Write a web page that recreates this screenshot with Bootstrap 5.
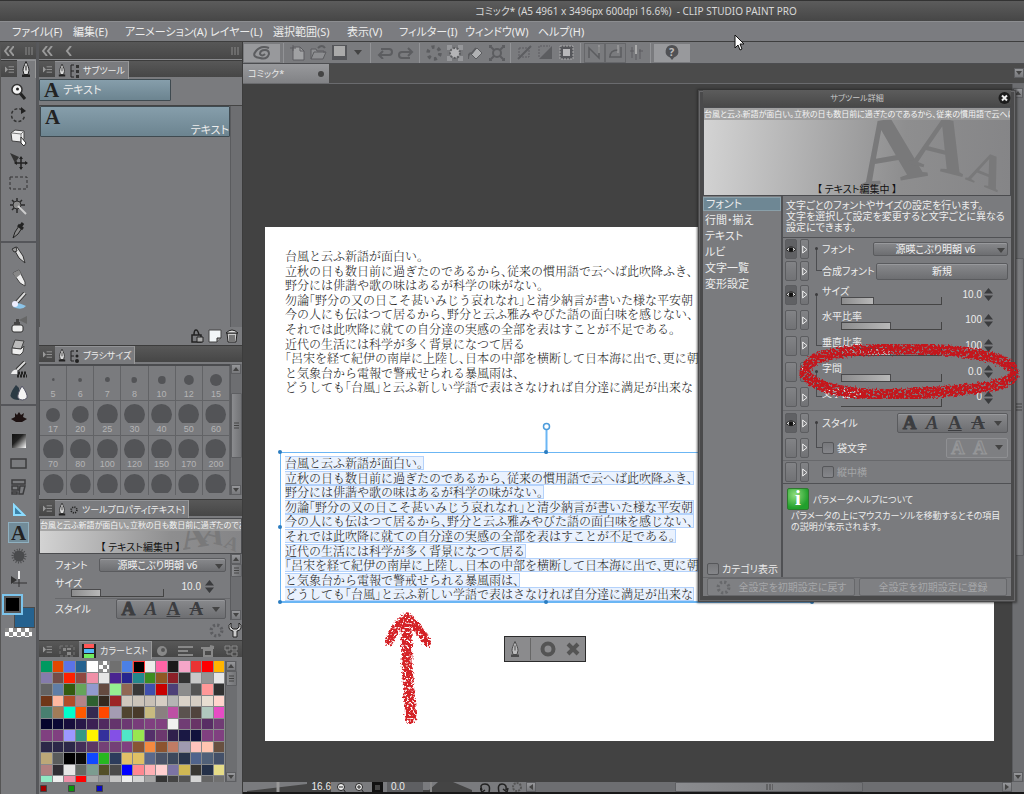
<!DOCTYPE html>
<html lang="ja">
<head>
<meta charset="utf-8">
<meta name="viewport" content="width=device-width, initial-scale=1">
<title>CLIP STUDIO PAINT PRO</title>
<link href="https://cdn.jsdelivr.net/npm/bootstrap@5.3.0/dist/css/bootstrap.min.css" rel="stylesheet">
<style>
:root{--ui:#7a7b7e;--dark:#484848;--line:#505154;--lit:#919295}
body{font-family:"Noto Sans","Noto Sans CJK JP",sans-serif;font-size:11px;line-height:12px;color:#ececec;background:var(--ui);font-feature-settings:"palt";min-height:100vh;overflow:hidden;cursor:default}
button,input{font:inherit;color:inherit;padding:0;border:0;background:none;font-feature-settings:inherit}
svg{display:block;flex:none}
a{color:inherit;text-decoration:none}
.window-col{height:100vh}
.titlebar{height:21px;background:linear-gradient(#5c5c5c,#464646);border-top:1px solid #333;color:#d8d8d8;padding-left:248px;font-size:10px;line-height:20px}
.menubar{display:grid;grid-template-columns:61px 52px 85px 63px 74px 52px 66px 73px auto;height:21px;padding-left:12px;line-height:20px;border-top:1px solid #8c8d90;background:#7b7c80;border-bottom:1px solid #3e3e3e}
.darkstrip{background:linear-gradient(#575757,#474747)}
.colhead{height:18px;padding:0 3px;border-bottom:1px solid #8a8b8e}
.toolcol{width:37px;border-left:1px solid #555;border-right:1px solid #55565a}
.panelcol{width:206px;border-left:2px solid #57585b;border-right:1px solid #3c3c3c}
.tabrow{height:17px;background:linear-gradient(#585858,#464646);border-top:1px solid #3c3c3c;margin-bottom:2px}
.toolcol .tabrow{margin-bottom:3px}
.tabrow .menubtn{width:16px}
.tab-on{background:var(--ui);border-top:1px solid var(--lit);border-right:1px solid #999;padding:0 3px;height:18px;font-size:9px}
.toolbtn{height:23px;width:35px;display:flex;align-items:center;justify-content:center}
.toolbtn.on span{background:#728c99;border:1px solid #8fb0c0;width:21px;height:21px;display:flex;align-items:center;justify-content:center}
.toolgroup+.toolgroup{border-top:2px solid #55565a}
.bluebtn{background:linear-gradient(#869eab,#6c8490);border:1px solid #3f4a50;border-radius:1px;text-align:left}
.bigA{font-family:"Liberation Serif",serif;font-weight:bold;font-size:21px;line-height:20px;color:#222}
.vscroll{width:12px;border-left:1px solid #5a5b5e;background:#6d6e71}
.sbtn{width:10px;height:10px;background:linear-gradient(#96979a,#77787b);border:1px solid #5e5f62;display:flex;align-items:center;justify-content:center}
.sthumb{background:linear-gradient(90deg,#8b8c8f,#727376);border:1px solid #5e5f62;border-radius:1px;display:flex;align-items:center;justify-content:center}
.brushgrid{display:grid;grid-template-columns:repeat(7,1fr);grid-auto-rows:35px;height:131px;overflow:hidden;border-top:2px solid #4b4c4f;border-left:1px solid #4b4c4f;flex:1}
.brushcell{display:flex;flex-direction:column;align-items:center;border-right:1px solid #626366;border-bottom:1px solid #626366;color:#b4b4b5;font-family:"Liberation Sans","Noto Sans CJK JP",sans-serif;font-size:9px;line-height:10px;position:relative}
.brushcell i{height:27px;display:flex;align-items:center;clip-path:inset(0 0 5px)}
.brushcell b{display:block;border-radius:50%;background:#535457}
.brushcell span{position:absolute;bottom:1px}
.preview{background:linear-gradient(95deg,#d4d4d4,#8e8e8f 65%,#858587);border:1px solid #4b4c4f;color:#111;overflow:hidden;position:relative}
.preview .strip{background:#9a9a9acc;color:#f4f4f4;font-size:8px;line-height:12px;white-space:nowrap;overflow:hidden}
.preview .ghost{position:absolute;right:0;top:0;height:100%}
.preview .cap{position:absolute;left:0;right:0;bottom:0;text-align:center;line-height:11px;font-size:10px}
.drop{background:linear-gradient(#88898c,#6d6e71);border:1px solid #5a5b5e;border-radius:2px;box-shadow:inset 0 1px #98999c;color:#f0f0f0}
select.drop{appearance:none;font:inherit;font-size:10px;text-align:center;text-align-last:center;padding:0 14px 0 4px;font-feature-settings:inherit}
.selwrap{position:relative;display:flex}
.selwrap select{width:100%}
.selwrap svg{position:absolute;right:3px;top:6px;pointer-events:none}
.bar-slider{appearance:none;display:block;height:8px;border-bottom:1px solid #444;border-right:1px solid #444;background:linear-gradient(90deg,#8c8c8d,#b8b8b8) no-repeat 1px 1px/calc(var(--v)*1% - 2px) 6px,linear-gradient(#4a4a4c,#4a4a4c) no-repeat 0 0/calc(var(--v)*1%) 8px}
.bar-slider::-webkit-slider-thumb{appearance:none;width:1px;height:7px;background:transparent}
.bar-slider::-moz-range-thumb{opacity:0}
.num{width:32px;text-align:right;font-family:"Liberation Sans",sans-serif;font-size:10px;height:12px}
.swatches{display:grid;grid-template-columns:repeat(16,1fr);width:184px;height:121px;overflow:hidden;align-content:start;background:#8b8b8d}
.swatches i{aspect-ratio:1;border-right:1px solid #88898b;border-bottom:1px solid #88898b}
.swatches i.on{outline:1px solid #f33;outline-offset:-1px;position:relative}
.checker{background:repeating-conic-gradient(#fff 0 25%,#8a8a8a 0 50%) 0 0/8px 8px}
.toolbar-main{height:22px;border-bottom:1px solid #4c4d50;padding-left:1px}
.tbtn{width:21px;height:20px;display:flex;align-items:center;justify-content:center;color:#5c5d60}
.tbtn.framed{border:1px solid #66676a}
.tbtn.lit{width:36px;height:18px;background:#98999c}
.vsep{width:1px;height:20px;background:#929396;margin:0 3px}
.doctabs{height:20px;background:#4b4b4b;border-bottom:1px solid #6a6b6e}
.doctab{width:86px;background:linear-gradient(#98999c,#818285);padding:0 5px;font-size:9px;color:#e9e9e9}
.workarea{background:#424242;padding:143px 18px 40px 22px;min-width:0;overflow:hidden}
.paper{background:#fff;height:514px;position:relative;color:#222;font-size:12px;font-weight:300;font-family:"Noto Serif CJK JP","Noto Sans CJK JP",serif;font-feature-settings:"halt";line-height:14px}
.lines{display:grid;grid-auto-rows:1fr;height:146px;white-space:nowrap;position:absolute;left:20px}
.lines.first{top:22px}
.selbox{position:absolute;left:15px;top:225px;width:532px;height:151px;border:1px solid #6bb6f4;border-bottom-width:2px}
.selbox .lines{left:4px;top:3px}
.selbox .lines span{background:#eaf2fe;border:1px solid #b4d2fb;border-left:0;line-height:12px;height:14px;display:inline-block;vertical-align:top}
.hnd{position:absolute;width:4px;height:4px;background:#2b7cc0;border-radius:50%}
.launcher{position:absolute;left:239px;top:409px;width:82px;height:26px;background:#8b8b8d;border:1px solid #2c2c2c;color:#545454}
.statusbar{height:12px;border-bottom:2px solid #181818;font-family:"Liberation Sans",sans-serif;font-size:10px;line-height:10px;background:var(--ui);overflow:hidden}
.dialog-sub{position:absolute;right:8px;top:90px;width:318px;height:512px;background:var(--ui);border:solid #4a4a4b;border-width:0 5px 6px 5px;box-shadow:0 0 2px 1px #222a;outline:1px solid #69696b;outline-offset:-2px}
.dialog-sub .dtitle{height:17px;background:linear-gradient(#5c5c5c,#484848);font-size:8px;color:#c8c8c8;text-align:center;line-height:16px;position:relative}
.catlist{width:80px;border-right:2px solid #505154;font-size:11px;padding-top:1px}
.catlist a{display:block;height:16px;line-height:15px;padding-left:2px;white-space:nowrap}
.catlist a.on{background:#6e8794;border:1px solid #899fa9;line-height:12px;height:14px;margin-bottom:1px}
.desc{font-size:10px;line-height:11px;padding:4px 0 0 3px;height:41px;white-space:nowrap}
.prow{display:flex;align-items:center;padding:0 3px 0 2px;height:22px}
.pgroup .prow{height:auto;min-height:0}
.pgroup{display:grid;grid-auto-rows:1fr;height:128px}
.prow.tall{height:25px}
.eye{width:12px;height:20px;border:1px solid #5c5d60;border-radius:2px;background:linear-gradient(#828386,#717275);margin-right:3px;display:flex;align-items:center;justify-content:center}
.eye.on{background:#606164}
.exp{width:9px;height:20px;border:1px solid #5c5d60;border-radius:2px;background:linear-gradient(#828386,#717275);display:flex;align-items:center;justify-content:center}
.tree{width:13px;align-self:stretch;position:relative}
.tree::before{content:"";position:absolute;left:7px;border-left:1px solid #4c4d50}
.tree.top::before{top:50%;bottom:0}.tree.mid::before{top:0;bottom:0}
.tree.end::before{top:0;bottom:50%;width:6px;border-bottom:1px solid #4c4d50}
.tree.top::after{content:"";position:absolute;left:6px;top:calc(50% - 2px);width:3px;height:3px;border-radius:50%;background:#3c3c3e}
.pbody{flex:1;display:flex;align-items:center;min-width:0;white-space:nowrap;font-size:10px}
.chk{appearance:none;width:12px;height:12px;border:1px solid #56575a;border-radius:2px;background:linear-gradient(#77787b,#85868a);margin-right:3px}
.stylebtns{height:20px;display:flex;align-items:center;justify-content:space-around}
.stylebtns button{font-family:"Liberation Serif",serif;font-weight:bold;font-size:19px;line-height:18px;color:#3c3d40}
.stylebtns .heavy{-webkit-text-stroke:1px #3c3d40}
.stylebtns.off{border-color:#8f9093;background:#7e7f82;box-shadow:none}.stylebtns.off button{color:#838487;-webkit-text-stroke:1px #969799}
.proprule{border-top:1px solid #68696c}
.infobox{border-top:1px solid #505154;height:95px;padding:4px 0 0 4px;font-size:9px;line-height:11px}
.infoicon{width:22px;height:22px;border-radius:2px;background:radial-gradient(circle at 35% 30%,#8fdc7c,#22a02c 70%);border:1px solid #2d7a2e;font:bold 21px/19px "Liberation Serif",serif;color:#fff;text-align:center}
.resetbtn{height:18px;border:1px solid #67686b;border-radius:2px;background:#7f8083;color:#a6a7a9;font-size:10px;flex:1;display:flex;align-items:center;justify-content:center}
.scribble{position:absolute;pointer-events:none}
.fgbg{height:34px;position:relative}
.fgbg span{position:absolute}
.fg{left:1px;top:0;width:21px;height:21px;background:#000;border:2px solid #7cc4ec;outline:2px solid #555;outline-offset:-4px}
.bg{left:13px;top:13px;width:21px;height:21px;background:#25628f;border:1px solid #4a4a4a}
.swatchwrap{padding:2px 0 0 2px}
</style>
</head>
<body>
<svg width="0" height="0" class="position-absolute" aria-hidden="true">
<defs>
<filter id="crayon" x="-10%" y="-10%" width="120%" height="120%"><feTurbulence type="fractalNoise" baseFrequency=".45" numOctaves="2" seed="4" result="n"/><feDisplacementMap in="SourceGraphic" in2="n" scale="6" xChannelSelector="R" yChannelSelector="B" result="d"/><feColorMatrix in="n" type="matrix" values="0 0 0 0 0  0 0 0 0 0  0 0 0 0 0  0 7 0 0 -2.2" result="m"/><feComposite in="d" in2="m" operator="in"/></filter>
<symbol id="nib" viewBox="0 0 10 16"><path d="M5 0C3 4 2 7 2 9l1 4h4l1-4C8 7 7 4 5 0z" fill="#ddd" stroke="#222"/><path d="M5 4v5" stroke="#222"/><path d="M1 13h8v2.500H1z" fill="#222"/></symbol>
<symbol id="plist" viewBox="0 0 10 10"><path d="M0 2l3 3-3 3zM4 2h6M4 5h6M4 8h6" fill="#999" stroke="#999"/></symbol>
<symbol id="dn" viewBox="0 0 8 5"><path d="M0 0h8L4 5z" fill="#444"/></symbol>
<symbol id="spin" viewBox="0 0 9 13"><path d="M0 5.500L4.500 0 9 5.500zM0 7.500L4.500 13 9 7.500z" fill="#3a3b3d"/></symbol>
<symbol id="tri" viewBox="0 0 6 9"><path d="M.7 1v7l4.300-3.500z" fill="none" stroke="#eee"/></symbol>
<symbol id="eyeo" viewBox="0 0 10 7"><path d="M0 3.500Q5-2 10 3.500 5 8 0 3.500z" fill="#ddd" stroke="#222"/><circle cx="5" cy="3.500" r="2.300" fill="#111"/></symbol>
<symbol id="burst" viewBox="0 0 14 14"><circle cx="7" cy="7" r="5" fill="none" stroke="currentColor" stroke-width="3" stroke-dasharray="2 1.930"/></symbol>
<symbol id="ua" viewBox="0 0 6 4"><path d="M0 4h6L3 0z" fill="#444"/></symbol>
<symbol id="da" viewBox="0 0 6 4"><path d="M0 0h6L3 4z" fill="#444"/></symbol>
<symbol id="aaa" viewBox="0 0 150 88"><g fill="#79797a" font-family="Liberation Serif,serif" font-weight="bold"><text x="-2" y="75" font-size="96" transform="rotate(-10 30 70)">A</text><text x="46" y="63" font-size="80" transform="rotate(14 75 60)">A</text><text x="104" y="78" font-size="50" transform="rotate(22 120 74)">A</text></g></symbol>
</defs></svg>

<div class="window-col d-flex flex-column">
<header>
 <div class="titlebar text-center">コミック* (A5 4961 x 3496px 600dpi 16.6%)&nbsp; - CLIP STUDIO PAINT PRO</div>
 <nav class="menubar"><a href="#">ファイル(F)</a><a href="#">編集(E)</a><a href="#">アニメーション(A)</a><a href="#">レイヤー(L)</a><a href="#">選択範囲(S)</a><a href="#">表示(V)</a><a href="#">フィルター(I)</a><a href="#">ウィンドウ(W)</a><a href="#">ヘルプ(H)</a></nav>
</header>

<div class="d-flex flex-grow-1" style="min-height:0">
<!-- tool palette -->
<aside class="toolcol flex-shrink-0">
 <div class="colhead darkstrip d-flex align-items-center justify-content-between"><svg width="10" height="10"><path d="M5 0L1 5l4 5M10 0L6 5l4 5" fill="none" stroke="#9a9a9a" stroke-width="2"/></svg><svg width="8" height="8"><path d="M1 0v8M4 0v8M7 0v8" stroke="#8a8a8a"/></svg></div>
 <div class="tabrow d-flex align-items-center"><span class="menubtn d-flex justify-content-center"><svg width="9" height="9"><use href="#plist"/></svg></span><span class="tab-on flex-grow-1 d-flex justify-content-center"><svg width="10" height="17"><use href="#nib"/></svg></span></div>
 <div class="toolgroup">
  <button class="toolbtn" aria-label="虫めがね"><svg width="18" height="18"><path d="M10 10l5 6" stroke="#222" stroke-width="3"/><circle cx="7" cy="6.500" r="5" fill="#f4f4f4" stroke="#333" stroke-width="1.500"/><circle cx="7.500" cy="6" r="1.500" fill="#222"/></svg></button>
  <button class="toolbtn" aria-label="回転"><svg width="18" height="18"><path d="M12 4A6.500 6.500 0 1 0 14.500 9" fill="none" stroke="#333" stroke-width="1.500" stroke-dasharray="3 2"/><path d="M11 1l5 4-5 3z" fill="#222"/></svg></button>
  <button class="toolbtn" aria-label="操作"><svg width="18" height="18"><path d="M1 4l4-3 9 1v8l-3 3-9-1z" fill="#eee" stroke="#444"/><path d="M2 4l9 1v8M11 5l3-3" fill="none" stroke="#777"/><path d="M11 8l5 6-2 3-3-3z" fill="#fff" stroke="#333"/></svg></button>
  <button class="toolbtn" aria-label="レイヤー移動"><svg width="18" height="18"><path d="M0 1l9 4-4 6z" fill="#333"/><path d="M11 5v12M5 11h12" stroke="#222" stroke-width="1.500"/><path d="M11 4l-2 3h4zM11 18l-2-3h4zM4 11l3-2v4zM18 11l-3-2v4z" fill="#222"/></svg></button>
  <button class="toolbtn" aria-label="選択範囲"><svg width="19" height="15"><rect x="1" y="1" width="17" height="12" fill="none" stroke="#333" stroke-dasharray="3 2"/></svg></button>
  <button class="toolbtn" aria-label="自動選択"><svg width="18" height="18"><path d="M7 0v15M0 7h15M2 2l10 10M12 2L2 12" stroke="#2c2c2c" stroke-width="1.500"/><circle cx="7" cy="7" r="4" fill="#8b8b8b" stroke="#2c2c2c"/><path d="M8 8l8 8" stroke="#ccc" stroke-width="2"/></svg></button>
  <button class="toolbtn" aria-label="スポイト"><svg width="16" height="18"><path d="M2 17l2-6 4-6 3 2-4 6z" fill="#888" stroke="#222"/><path d="M7 4l5 4M9 6l3-4" stroke="#222" stroke-width="3"/></svg></button>
 </div>
 <div class="toolgroup">
  <button class="toolbtn" aria-label="ペン"><svg width="16" height="18"><path d="M3 2l3-1 6 9 2 7-6-5-4-7z" fill="#ddd" stroke="#333"/><path d="M1 3l4-2 1 4-3 1z" fill="#999" stroke="#333"/></svg></button>
  <button class="toolbtn" aria-label="鉛筆"><svg width="16" height="18"><path d="M2 4l6-3 6 12v4l-5-3z" fill="#eee" stroke="#444"/><path d="M2 4l6-3 2 4-5 4z" fill="#888"/></svg></button>
  <button class="toolbtn" aria-label="筆"><svg width="18" height="18"><path d="M3 15q9 4 13-1-6-3-10-3z" fill="#8cc4e8"/><path d="M15 1L7 10" stroke="#333" stroke-width="4"/><path d="M15 1L7 10" stroke="#ddd" stroke-width="2"/><circle cx="5" cy="12" r="3" fill="#eef"/></svg></button>
  <button class="toolbtn" aria-label="エアブラシ"><svg width="18" height="18"><rect x="2" y="10" width="11" height="7" rx="2" fill="#eee" stroke="#333"/><path d="M4 7h6v3H4zM6 4h3v3H6z" fill="#444"/><path d="M9 5l8-4v8z" fill="#666"/></svg></button>
  <button class="toolbtn" aria-label="消しゴム"><svg width="18" height="18"><path d="M5 2l9 1-3 8-9-1z" fill="#bbb" stroke="#444"/><path d="M2 10l9 1 3-3-1 6-3 3-8-1z" fill="#eee" stroke="#444"/></svg></button>
  <button class="toolbtn" aria-label="デコレーション"><svg width="18" height="18"><path d="M15 1L7 9" stroke="#333" stroke-width="4"/><path d="M15 1L7 9" stroke="#ddd" stroke-width="2"/><path d="M1 13q2-5 6-4v4z" fill="#eee"/><path d="M8 12h9M7 15h10" stroke="#222" stroke-width="3" stroke-dasharray="2 1"/></svg></button>
  <button class="toolbtn" aria-label="色混ぜ"><svg width="18" height="18"><path d="M6 1Q-1 10 1 13t8 3V4z" fill="#2b3a44"/><path d="M12 2q6 8 5 12-5 4-9 0Q7 10 12 2z" fill="#f4f4f4" stroke="#556"/></svg></button>
 </div>
 <div class="toolgroup">
  <button class="toolbtn" aria-label="塗りつぶし"><svg width="18" height="14"><path d="M5 2l2 2 2-3 2 3 3-2-1 4 4 2-5 3H6L1 8l4-2z" fill="#1d1212"/></svg></button>
  <button class="toolbtn" aria-label="グラデーション"><svg width="14" height="14"><defs><linearGradient id="gd" x2="1" y2="1"><stop stop-color="#111"/><stop offset=".4" stop-color="#222"/><stop offset="1" stop-color="#fff"/></linearGradient></defs><rect width="14" height="14" fill="url(#gd)"/></svg></button>
  <button class="toolbtn" aria-label="図形"><svg width="17" height="11"><rect x="1" y="1" width="15" height="9" fill="none" stroke="#3c3c3e" stroke-width="1.500"/></svg></button>
  <button class="toolbtn" aria-label="コマ枠"><svg width="15" height="16"><path d="M1 1h13v4H1zM1 7h6v4H1zM1 13h5v2H1zM9 7l5 0-2 8H8z" fill="none" stroke="#3c3c3e" stroke-width="1.500"/></svg></button>
  <button class="toolbtn" aria-label="定規"><svg width="14" height="14"><path d="M2 2v10h10z" fill="#3c82a8" stroke="#8cdcff" stroke-width="2"/></svg></button>
  <button class="toolbtn on" aria-label="テキスト"><span class="bigA">A</span></button>
  <button class="toolbtn" aria-label="フキダシ"><svg width="16" height="16"><circle cx="8" cy="8" r="5.500" fill="#4a4b4d"/><circle cx="8" cy="8" r="6.500" fill="none" stroke="#4a4b4d" stroke-width="2" stroke-dasharray="1 1.500"/></svg></button>
  <button class="toolbtn" aria-label="線修正"><svg width="18" height="16"><path d="M1 5l6 4-6 4z" fill="#333"/><path d="M9 0v8" stroke="#eee" stroke-width="2"/><path d="M9 8v8M3 12h14" stroke="#333"/></svg></button>
 </div>
 <div class="fgbg mt-1"><span class="bg"></span><span class="fg"></span></div>
 <div class="checker mx-1" style="height:9px"></div>
</aside>

<!-- palettes -->
<aside class="panelcol flex-shrink-0">
 <div class="colhead darkstrip d-flex align-items-center"><svg width="30" height="10"><path d="M5 0L1 5l4 5M10 0L6 5l4 5M29 0l-4 5 4 5" fill="none" stroke="#9a9a9a" stroke-width="2"/></svg><svg class="ms-auto" width="8" height="8"><path d="M1 0v8M4 0v8M7 0v8" stroke="#8a8a8a"/></svg></div>
 <section>
  <div class="tabrow d-flex align-items-start"><span class="menubtn d-flex justify-content-center pt-1"><svg width="9" height="9"><use href="#plist"/></svg></span><span class="tab-on d-flex align-items-center gap-1"><svg width="8" height="17"><use href="#nib"/></svg><svg width="9" height="14"><path d="M4 1H1v12h3M1 7h3" fill="none" stroke="#222"/><path d="M6 1h3v3H6zM6 6h3v3H6zM6 11h3v3H6z" fill="#333"/></svg>サブツール</span></div>
  <button class="bluebtn d-flex align-items-center" style="width:65%;height:22px"><span class="bigA px-1">A</span>テキスト</button>
  <div class="d-flex mt-1" style="height:222px;border-top:1px solid #444;border-left:1px solid #555">
   <div class="flex-grow-1"><button class="bluebtn d-flex w-100 justify-content-between" style="height:31px"><span class="bigA ps-1">A</span><span class="align-self-end">テキスト</span></button></div><div class="vscroll"></div>
  </div>
  <div class="d-flex justify-content-end gap-1 align-items-center pe-1" style="height:18px"><svg width="14" height="14"><path d="M2 6h9v7H2zM4 6q0-5 2-5t3 5" fill="none" stroke="#222" stroke-width="1.500"/><path d="M7 8h6v5H7z" fill="#aaa" stroke="#222"/></svg><svg width="14" height="14"><path d="M1 1h12v8l-4 4H1z" fill="#f2f6f8" stroke="#444"/><path d="M9 13V9h4" fill="#999" stroke="#333"/></svg><svg width="12" height="14"><path d="M1 4h10l-1 9H2z" fill="#ccc" stroke="#222"/><path d="M0 4q6-6 12 0zM4 6v6M6 6v6M8 6v6" fill="#ddd" stroke="#222"/></svg></div>
 </section>
 <section>
  <div class="tabrow d-flex align-items-start"><span class="menubtn d-flex justify-content-center pt-1"><svg width="9" height="9"><use href="#plist"/></svg></span><span class="tab-on d-flex align-items-center gap-1"><svg width="8" height="17"><use href="#nib"/></svg><svg width="9" height="14"><path d="M4 2H1v10h3M1 7h3" fill="none" stroke="#222"/><circle cx="7" cy="2" r="1" fill="#222"/><circle cx="7" cy="7" r="1.500" fill="#222"/><circle cx="7" cy="12" r="2" fill="#222"/></svg>ブラシサイズ</span></div>
  <div class="d-flex"><div class="brushgrid" id="brushes"></div>
  <div class="vscroll d-flex flex-column"><span class="sbtn"><svg width="6" height="4"><use href="#ua"/></svg></span><span class="sthumb" style="margin-top:19px;height:65px"><svg width="5" height="7"><path d="M0 1h5M0 3.500h5M0 6h5" stroke="#444"/></svg></span><span class="sbtn mt-auto"><svg width="6" height="4"><use href="#da"/></svg></span></div></div>
 </section>
 <section class="pt-1">
  <div class="tabrow d-flex align-items-start"><span class="menubtn d-flex justify-content-center pt-1"><svg width="9" height="9"><use href="#plist"/></svg></span><span class="tab-on d-flex align-items-center gap-1"><svg width="8" height="17"><use href="#nib"/></svg><svg width="8" height="8"><use href="#burst" color="#222"/></svg>ツールプロパティ[テキスト]</span></div>
  <div class="preview" style="height:36px"><svg class="ghost" viewBox="0 0 150 88"><use href="#aaa"/></svg><div class="strip position-relative">台風と云ふ新語が面白い。立秋の日も数日前に過ぎたのである</div><div class="cap">【 テキスト編集中 】</div></div>
  <div class="d-flex" style="height:66px;overflow:hidden">
   <div class="flex-grow-1 ps-3" style="font-size:10px">
    <div class="d-flex align-items-center justify-content-between" style="height:21px"><label for="f1">フォント</label><span class="selwrap me-1" style="width:127px"><select id="f1" class="drop"><option>源暎こぶり明朝 v6</option></select><svg width="8" height="5"><use href="#dn"/></svg></span></div>
    <div class="d-flex align-items-center" style="height:23px"><div style="width:112px"><label class="d-block" for="s1">サイズ</label><input id="s1" type="range" class="bar-slider ms-3" style="--v:33;width:93px"></div><input class="num ms-auto" value="10.0" aria-label="サイズ値"><svg class="ms-1 me-3" width="9" height="13"><use href="#spin"/></svg></div>
    <div class="d-flex justify-content-between align-items-center proprule"><span>スタイル</span><div class="drop stylebtns me-1" style="width:110px"><button class="heavy">A</button><button><i>A</i></button><button><u>A</u></button><button><s>A</s></button><svg width="8" height="5"><use href="#dn"/></svg></div></div>
   </div>
   <div class="vscroll d-flex flex-column"><span class="sbtn"><svg width="6" height="4"><use href="#ua"/></svg></span><span class="sthumb" style="height:13px"><svg width="5" height="7"><path d="M0 1h5M0 3.500h5M0 6h5" stroke="#444"/></svg></span><span class="sbtn mt-auto"><svg width="6" height="4"><use href="#da"/></svg></span></div>
  </div>
  <div class="d-flex justify-content-end align-items-center gap-1" style="height:20px;color:#5c5d60"><svg width="15" height="15"><use href="#burst"/></svg><svg width="14" height="16"><path d="M3 1v4l2 2h4l2-2V1q3 2 2 5T9 9v6H5V9Q2 9 1 6t2-5z" fill="#ccc" stroke="#222"/></svg></div>
 </section>
 <section>
  <div class="tabrow d-flex align-items-start"><span class="menubtn d-flex justify-content-center pt-1"><svg width="9" height="9"><use href="#plist"/></svg></span><span class="px-1 pt-1"><svg width="16" height="12"><path d="M1 1h14v10H1z" fill="none" stroke="#777" stroke-dasharray="3 2"/><path d="M4 3h3v3H4zM8 3h4v2H8zM8 7h4v3H8z" fill="#888"/></svg></span>
  <span class="tab-on d-flex align-items-center gap-1"><svg width="14" height="14"><path d="M0 0h14v14H0z" fill="#222"/><path d="M2 0h10v4H2z" fill="#ff5656"/><path d="M2 5h10v4H2z" fill="#50b8f8"/><path d="M2 10h10v4H2z" fill="#70ec60"/></svg>カラーヒスト</span>
  <span class="d-flex flex-grow-1 justify-content-around pt-1"><svg width="13" height="12"><circle cx="6" cy="6" r="5" fill="#888"/><circle cx="7" cy="5" r="2" fill="#555"/></svg><svg width="15" height="12"><path d="M0 2h15M0 6h10M0 10h15" stroke="#888" stroke-width="2"/></svg><svg width="14" height="12"><path d="M0 3h13M3 5h8v6H3zM9 1l4 1" fill="none" stroke="#888" stroke-width="2"/></svg><svg width="14" height="12"><path d="M1 1h5v4H1zM8 1h5v4H8zM8 7h5v4H8zM3 5v4h5" fill="none" stroke="#888"/></svg></span></div>
  <div class="d-flex swatchwrap"><div class="swatches" id="swatches"></div>
   <div class="vscroll d-flex flex-column"><span class="sbtn"><svg width="6" height="4"><use href="#ua"/></svg></span><span class="sthumb" style="height:15px"><svg width="5" height="7"><path d="M0 1h5M0 3.500h5M0 6h5" stroke="#444"/></svg></span><span class="sbtn mt-auto"><svg width="6" height="4"><use href="#da"/></svg></span></div></div>
  <svg width="110" height="9" style="margin-top:2px"><g stroke="#444"><path d="M1.500 1.500h6v6h-6z" fill="#a00000"/><path d="M29.500 1.500h6v6h-6z" fill="#0a960a"/><path d="M57.500 1.500h6v6h-6z" fill="#0a0ac0"/></g></svg>
 </section>
</aside>

<!-- document -->
<main class="flex-grow-1 d-flex flex-column" style="min-width:0">
 <div class="toolbar-main d-flex align-items-center">
  <button class="tbtn lit" aria-label="CLIP STUDIO"><svg width="18" height="14"><path d="M16 2Q8-1 3 5t4 7q7 2 9-4 0-4-4-4-5 0-5 4 2 3 5 0" fill="none" stroke="currentColor" stroke-width="2"/></svg></button><i class="vsep"></i>
  <button class="tbtn" aria-label="新規"><svg width="15" height="16"><path d="M3 2h7l4 4v9H3z" fill="#a0a1a3" stroke="currentColor"/><path d="M10 2v4h4M0 3h6M3 0v6" fill="none" stroke="currentColor"/></svg></button>
  <button class="tbtn" aria-label="開く"><svg width="17" height="15"><path d="M1 14V4h5l1 2h7v2M1 14l3-7h12l-3 7z" fill="#8d8e91" stroke="currentColor"/><path d="M8 3q4-4 7 0" fill="none" stroke="currentColor" stroke-width="2"/></svg></button>
  <button class="tbtn" aria-label="保存"><svg width="15" height="15"><path d="M0 0h15v15H0z" fill="#55565a"/><path d="M2 1h11v10H2z" fill="#aaa"/></svg></button><svg width="8" height="5" class="ms-1"><use href="#dn"/></svg><i class="vsep ms-2"></i>
  <button class="tbtn" aria-label="取り消し"><svg width="16" height="12"><path d="M4 2h8q3 0 3 3t-3 3H3M6 4L2 8l4 4" fill="none" stroke="currentColor" stroke-width="2"/></svg></button>
  <button class="tbtn" aria-label="やり直し"><svg width="16" height="12"><path d="M12 11H4q-3 0-3-3t3-3h9M10 1l4 4-4 4" fill="none" stroke="currentColor" stroke-width="2"/></svg></button><i class="vsep"></i>
  <button class="tbtn" aria-label="消去"><svg width="16" height="16"><circle cx="8" cy="8" r="6" fill="none" stroke="currentColor" stroke-width="3.500" stroke-dasharray="3 3.280"/></svg></button>
  <button class="tbtn" aria-label="選択範囲外を消去"><svg width="16" height="16"><path d="M0 0h16v16H0z" fill="#96979a"/><path d="M5 0h6v16H5zM0 5h16v6H0z" fill="#77787b"/><circle cx="8" cy="8" r="5" fill="#b4b4b6" stroke="currentColor" stroke-width="2" stroke-dasharray="2 1.500"/></svg></button>
  <button class="tbtn" aria-label="塗りつぶし"><svg width="16" height="16"><path d="M3 9l6-6 5 5-6 6z" fill="#b0b1b3" stroke="currentColor"/><path d="M0 14q0-6 4-6l4-5" fill="none" stroke="currentColor" stroke-width="2"/></svg></button>
  <button class="tbtn" aria-label="拡大"><svg width="16" height="16"><circle cx="8" cy="8" r="4" fill="none" stroke="currentColor" stroke-width="2"/><path d="M1 1l4 4M15 1l-4 4M1 15l4-4M15 15l-4-4M0 3V0h3M13 0h3v3M0 13v3h3M13 16h3v-3" fill="none" stroke="currentColor" stroke-width="2"/></svg></button><i class="vsep"></i>
  <button class="tbtn" aria-label="選択解除"><svg width="15" height="15"><path d="M2 3h10v9H2z" fill="none" stroke="currentColor" stroke-dasharray="2 1"/><path d="M1 14L14 1" stroke="currentColor" stroke-width="2"/></svg></button>
  <button class="tbtn" aria-label="反転"><svg width="15" height="15"><path d="M14 1v13H1z" fill="currentColor"/><path d="M1 12V1h11" fill="none" stroke="currentColor" stroke-dasharray="2 1"/></svg></button>
  <button class="tbtn" aria-label="境界表示"><svg width="15" height="15"><path d="M1 1h13v13H1z" fill="#55565a" stroke="#aaa" stroke-dasharray="2 1"/><path d="M4 4h7v7H4z" fill="#b8b8ba"/></svg></button><i class="vsep"></i>
  <button class="tbtn framed" aria-label="定規スナップ"><svg width="15" height="15"><path d="M2 13V3l10 10V2" fill="none" stroke="currentColor" stroke-width="1.500"/><path d="M12 0v8" stroke="#aaa"/></svg></button>
  <button class="tbtn framed" aria-label="特殊定規"><svg width="15" height="15"><path d="M1 12h12V2M2 12q0-7 8-7" fill="none" stroke="currentColor" stroke-width="1.500"/><path d="M10 0v8" stroke="#aaa"/></svg></button>
  <button class="tbtn" aria-label="グリッド"><svg width="15" height="15"><path d="M1 6h4M10 6h4M3 2v11M7 8v7M11 4v10" stroke="currentColor"/><path d="M7 0v9" stroke="#aaa" stroke-width="2"/></svg></button><i class="vsep"></i>
  <button class="tbtn lit" aria-label="ヘルプ"><svg width="16" height="15"><path d="M8 0a7 6.500 0 0 1 2 12.500L8 15l-2-2.500A7 6.500 0 0 1 8 0z" fill="#505154"/><text x="5" y="11" font-size="11" font-weight="bold" fill="#bbb">?</text></svg></button>
 </div>
 <div class="doctabs d-flex justify-content-between"><div class="doctab d-flex align-items-center justify-content-between">コミック*<svg width="6" height="6"><circle cx="3" cy="3" r="3" fill="#444"/></svg></div><span class="sbtn mt-1"><svg width="6" height="4"><use href="#da"/></svg></span></div>
 <div class="d-flex flex-grow-1" style="min-height:0">
  <div class="workarea flex-grow-1">
   <div class="paper">
    <div class="lines first" data-text></div>
    <div class="selbox"><div class="lines" data-text></div>
     <svg class="position-absolute" style="left:261px;top:-31px" width="9" height="32"><path d="M4.500 8v24" stroke="#6bb6f4" stroke-width="2"/><circle cx="4.500" cy="4.500" r="3" fill="#fff" stroke="#4c9cdc" stroke-width="1.500"/></svg>
     <i class="hnd" style="left:-3px;top:-3px"></i><i class="hnd" style="left:calc(50% - 2px);top:-3px"></i><i class="hnd" style="left:-3px;top:calc(50% - 2px)"></i><i class="hnd" style="left:-3px;bottom:-3px"></i><i class="hnd" style="left:calc(50% - 2px);bottom:-3px"></i><i class="hnd" style="right:-3px;bottom:-3px"></i>
    </div>
    <div class="launcher d-flex align-items-center justify-content-around"><svg width="10" height="17"><use href="#nib" opacity=".6"/></svg><i style="width:1px;height:22px;background:#666"></i><svg width="16" height="16"><circle cx="8" cy="8" r="5.500" fill="none" stroke="#545454" stroke-width="4"/></svg><svg width="14" height="14"><path d="M2 2l10 10M12 2L2 12" stroke="#545454" stroke-width="4"/></svg></div>
    <svg class="scribble" style="left:113px;top:378px" width="62" height="125"><g filter="url(#crayon)" fill="none" stroke="#d42028" stroke-linecap="round" stroke-linejoin="round"><path d="M33 113C30 80 28 45 28 14" stroke-width="11"/><path d="M11 36Q18 20 29 12q11 10 20 25" stroke-width="9"/></g></svg>
   </div>
  </div>
  <div class="vscroll d-flex flex-column flex-shrink-0"><span class="sbtn mt-1"><svg width="6" height="4"><use href="#ua"/></svg></span><span class="sthumb" style="margin-top:42.500%;margin-top:160px;height:298px"><svg width="7" height="8"><path d="M0 1h7M0 4h7M0 7h7" stroke="#444"/></svg></span><span class="sbtn mt-auto"><svg width="6" height="4"><use href="#da"/></svg></span></div>
 </div>
 <div class="statusbar d-flex align-items-center">
  <svg width="60" height="10" class="ms-1"><path d="M0 9L60 2v8H0z" fill="#444"/><path d="M31 0v10" stroke="#999" stroke-width="3"/></svg><span class="text-end" style="width:24px;background:#444">16.6</span>
  <svg class="ms-1" width="48" height="11"><circle cx="6" cy="5" r="3.500" fill="#eee" stroke="#222"/><path d="M4 5h4M9 8l2 3" stroke="#222"/><circle cx="24" cy="5" r="3.500" fill="#eee" stroke="#222"/><path d="M22 5h4M24 3v4M27 8l2 3" stroke="#222"/><path d="M37 0h11v11H37z" fill="#111"/><path d="M40 3h5v5h-5z" fill="#444"/></svg>
  <span class="ms-1 ps-1" style="width:36px;background:#5e5f62">0.0</span><svg width="49" height="10"><path d="M0 10V8h6l9-8h15l19 8v2z" fill="#444"/><path d="M8 0v10" stroke="#888" stroke-width="2"/></svg>
  <svg class="ms-2" width="42" height="11"><path d="M2 8q-3-6 3-6t4 8M0 6l2 4 3-2M19 10q-2-8 3-8t4 6M23 7l4 3 1-4" fill="none" stroke="#222" stroke-width="1.500"/><circle cx="37" cy="5" r="4" fill="none" stroke="#555" stroke-width="2" stroke-dasharray="2 1"/></svg>
  <span class="sbtn ms-1"><svg width="4" height="6"><path d="M4 0v6L0 3z" fill="#444"/></svg></span><span class="flex-grow-1 d-flex justify-content-center" style="background:#6d6e71"><span class="sthumb" style="width:188px;height:10px"><svg width="7" height="6"><path d="M1 0v6M4 0v6M7 0v6" stroke="#444"/></svg></span></span><span class="sbtn"><svg width="4" height="6"><path d="M0 0v6l4-3z" fill="#444"/></svg></span><span style="width:12px"></span>
 </div>
</main>
</div>
</div>

<!-- floating sub tool detail window -->
<div class="dialog-sub" role="dialog" aria-label="サブツール詳細">
 <div class="dtitle">サブツール詳細<button class="position-absolute end-0 top-0" aria-label="閉じる"><svg width="13" height="15"><circle cx="6.500" cy="8" r="6" fill="#1c1c1c"/><path d="M4 5.500l5 5M9 5.500l-5 5" stroke="#eee" stroke-width="2"/></svg></button></div>
 <div class="preview" style="height:89px"><svg class="ghost" viewBox="0 0 150 88"><use href="#aaa"/></svg><div class="strip position-relative">台風と云ふ新語が面白い。立秋の日も数日前に過ぎたのであるから、従来の慣用語で云へば此</div><div class="cap">【 テキスト編集中 】</div></div>
 <div class="d-flex" style="height:381px">
  <div class="catlist d-flex flex-column flex-shrink-0"><a href="#" class="on">フォント</a><a href="#">行間・揃え</a><a href="#">テキスト</a><a href="#">ルビ</a><a href="#">文字一覧</a><a href="#">変形設定</a><label class="mt-auto d-flex align-items-center ps-1" style="font-size:10px;padding-bottom:2px"><input type="checkbox" class="chk">カテゴリ表示</label></div>
  <div class="flex-grow-1" style="min-width:0">
   <div class="desc">文字ごとのフォントやサイズの設定を行います。<br>文字を選択して設定を変更すると文字ごとに異なる<br>設定にできます。</div>
   <div style="border-top:1px solid #505154">
    <div class="prow"><button class="eye on" aria-label="表示"><svg width="10" height="7"><use href="#eyeo"/></svg></button><button class="exp" aria-label="展開"><svg width="6" height="9"><use href="#tri"/></svg></button><i class="tree top"></i><div class="pbody justify-content-between"><label for="f2">フォント</label><span class="selwrap" style="width:135px"><select id="f2" class="drop"><option>源暎こぶり明朝 v6</option></select><svg width="8" height="5"><use href="#dn"/></svg></span></div></div>
    <div class="prow"><button class="eye" aria-label="表示"></button><button class="exp" aria-label="展開"><svg width="6" height="9"><use href="#tri"/></svg></button><i class="tree end"></i><div class="pbody justify-content-between">合成フォント<button class="drop" style="width:132px;height:17px">新規</button></div></div>
    <div class="pgroup" id="params"></div>
    <div class="prow tall proprule"><button class="eye on" aria-label="表示"><svg width="10" height="7"><use href="#eyeo"/></svg></button><button class="exp" aria-label="展開"><svg width="6" height="9"><use href="#tri"/></svg></button><i class="tree top"></i><div class="pbody justify-content-between">スタイル<div class="drop stylebtns" style="width:111px"><button class="heavy">A</button><button><i>A</i></button><button><u>A</u></button><button><s>A</s></button><svg width="8" height="5"><use href="#dn"/></svg></div></div></div>
    <div class="prow tall"><button class="eye" aria-label="表示"></button><button class="exp" aria-label="展開"><svg width="6" height="9"><use href="#tri"/></svg></button><i class="tree end"></i><div class="pbody justify-content-between"><label class="d-flex align-items-center"><input type="checkbox" class="chk">袋文字</label><div class="drop stylebtns off" style="width:62px"><button>A</button><button>A</button><svg width="8" height="5"><use href="#dn"/></svg></div></div></div>
    <div class="prow proprule" style="height:23px"><button class="eye" aria-label="表示"></button><button class="exp" aria-label="展開"><svg width="6" height="9"><use href="#tri"/></svg></button><i class="tree"></i><div class="pbody" style="color:#a4a5a7"><label class="d-flex align-items-center"><input type="checkbox" class="chk" disabled>縦中横</label></div></div>
    <div class="infobox"><div class="d-flex align-items-center gap-1"><span class="infoicon">i</span>パラメータヘルプについて</div><div class="ps-1 text-nowrap">パラメータの上にマウスカーソルを移動するとその項目<br>の説明が表示されます。</div></div>
   </div>
  </div>
 </div>
 <div class="d-flex gap-1 px-1 proprule"><button class="resetbtn" disabled><svg width="15" height="15" class="me-2" color="#67686b"><use href="#burst"/></svg>全設定を初期設定に戻す</button><button class="resetbtn" disabled>全設定を初期設定に登録</button></div>
 <svg class="scribble" style="left:90px;top:246px" width="234" height="74"><path filter="url(#crayon)" d="M12 38C12 18 50 14 100 13s115 5 120 21c4 16-30 18-75 22S30 62 12 38z" fill="none" stroke="#c4141c" stroke-width="11"/></svg>
</div>
<svg class="position-absolute" style="left:734px;top:34px" width="12" height="18"><path d="M1 1v13l3-3 2 5 2-1-2-5h4z" fill="#fff" stroke="#111"/></svg>

<script>
const sizes=[5,6,7,8,10,12,15,17,20,25,30,40,50,60,70,80,100,120,150,170,200,250,300,400,500,600,700,800];
const dots=[3,4,5,6,8,10,12,14,17];
document.getElementById('brushes').innerHTML=sizes.map((s,i)=>{const d=dots[i]||21;return `<div class="brushcell"><i><b style="width:${d}px;height:${d}px"></b></i><span>${s}</span></div>`}).join('');
const colors=`009960 e04800 5b73e6 25628f ffffff checker 707070 4b80e6 000000 ececea ff64a6 1a1a1a f5a6c8 eb3333 ff0000 ffb400
857cab 734d48 ff2000 904840 f090a8 e6e6e6 4a2490 26258f 24888c 3c8c20 8f5824 8c2028 333333 c8c8c8 949494 e6e6e6
646464 607ea6 345a10 66a45a 929ace 644a40 96ee90 906854 383838 4050ac c80000 4c4078 8c8c8c 545454 ff9898 303030
703618 ffb8a0 b04c2a b48488 2e6030 34281f 9c2426 d0c8be ccc4ba c8c0b6 d6cec4 b4b4b4 dad2c8 d6cec4 e8ded2 ffd4cc
488070 a07c58 00ffcc ff5a00 342a50 ff4800 a49cb2 504430 483a2a c8ba80 8a8080 bc50a4 5a524e 50443e b0c8be e64cc4
04042c 0a0834 180e3c 281848 3c2054 502a60 64346c 6c3872 783c7a 804080 804080 f0f0f0 703c74 683466 582e64 703c74
804080 804080 9c98ff 349884 fff400 34309c 8450e6 50e6c8 98e650 54306a 6c386e 30204c 1a1844 10123c 804080 804080
2c2848 2c2848 2c2848 442e58 5c3664 744076 744076 804080 885434 f48a40 8c5430 c07c64 a09ab0 ffc4bc ffc4b0 685040
bca878 5a5c5c 000000 0a0a0a 1048ff 26b820 2c3c5c e2c068 e0c064 5a688a 4a5266 3c485c 28344c 50648c 506078 445068
b08080 302e34 e6e6e6 646a64 7c9c90 545028 4a4a4a 0000ff ff8890 ffb0b4 ffd0d0 7c74a4 d0b854 383632 243048 e6dc88
90e8c4 eeeeee ec90a8 ff0000 a8a8a8 989898 c4c4c4 eeeeee d4d4d4 a4a4a4 343434 444444 545454 d4d4d4 646464 707070`.split(/\s+/);
document.getElementById('swatches').innerHTML=colors.map((c,i)=>c==='checker'?'<i class="checker"></i>':`<i class="${i===8?'on':''}" style="background:#${c}"></i>`).join('');
const story=['台風と云ふ新語が面白い。','立秋の日も数日前に過ぎたのであるから、従来の慣用語で云へば此吹降ふき、','野分には俳諧や歌の味はあるが科学の味がない。','勿論「野分の又の日こそ甚いみじう哀れなれ」と清少納言が書いた様な平安朝','今の人にも伝はつて居るから、野分と云ふ雅みやびた語の面白味を感じない、','それでは此吹降に就ての自分達の実感の全部を表はすことが不足である。','近代の生活には科学が多く背景になつて居る','「呂宋を経て紀伊の南岸に上陸し、日本の中部を横断して日本海に出で、更に朝','と気象台から電報で警戒せられる暴風雨は、','どうしても「台風」と云ふ新しい学語で表はさなければ自分達に満足が出来な'];
document.querySelectorAll('[data-text]').forEach(e=>e.innerHTML=story.map(t=>`<div><span>${t}</span></div>`).join(''));
const params=[['サイズ','10.0',33,'top',1],['水平比率','100',50,'mid',0],['垂直比率','100',50,'end',0],['字間','0.0',50,'top',0],['文字詰め','0',0,'end',0]];
document.getElementById('params').innerHTML=params.map(([n,v,p,t,e],i)=>`<div class="prow"><button class="eye ${e?'on':''}" aria-label="表示">${e?'<svg width="10" height="7"><use href="#eyeo"/></svg>':''}</button><button class="exp" aria-label="展開"><svg width="6" height="9"><use href="#tri"/></svg></button><i class="tree ${t}"></i><div class="pbody"><div><label class="d-block" for="p${i}">${n}</label><input type="range" id="p${i}" class="bar-slider" style="--v:${p};width:101px;margin-left:19px"></div><input class="num ms-auto" value="${v}" aria-label="${n}値"><svg width="9" height="13" style="margin:0 15px 0 2px"><use href="#spin"/></svg></div></div>`).join('');
</script>
<script src="https://cdn.jsdelivr.net/npm/bootstrap@5.3.0/dist/js/bootstrap.bundle.min.js"></script>
</body>
</html>
